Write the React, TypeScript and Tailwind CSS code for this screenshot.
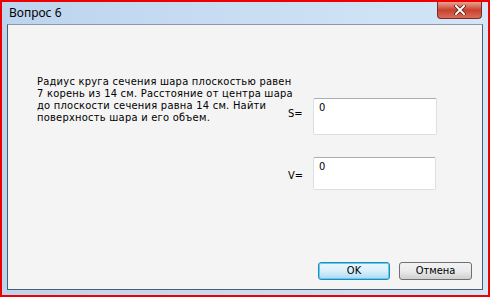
export default function App() {
    const uiFont = { fontFamily: '"DejaVu Sans Condensed", "DejaVu Sans", sans-serif' };

    return (
        <div className="w-[490px] h-[297px] border-2 border-[#ee0000] bg-gradient-to-r from-[#bcd4ee] via-[#c9ddf3] to-[#d3e5f7] flex flex-col overflow-hidden">
            {/* title bar */}
            <div className="h-[22px] flex items-start justify-between shrink-0">
                <span
                    className="pl-[7px] pt-[3px] text-[12px] leading-[16px] text-black"
                    style={{ fontFamily: '"Noto Sans", "Open Sans", sans-serif' }}
                >
                    Вопрос 6
                </span>
                <button className="mr-[6px] w-[45px] h-[17px] rounded-b-[4px] border border-t-0 border-[#7a2a22] bg-gradient-to-b from-[#e8a090] via-[#c8402f] to-[#d86c58] flex items-center justify-center">
                    <svg width="12" height="10" viewBox="0 0 12 10">
                        <path d="M2 1 L10 9 M10 1 L2 9" stroke="#4a1a14" strokeWidth="3.4" strokeLinecap="square" />
                        <path d="M2 1 L10 9 M10 1 L2 9" stroke="#ffffff" strokeWidth="2" strokeLinecap="square" />
                    </svg>
                </button>
            </div>

            {/* client area */}
            <div
                className="flex-1 mx-[5px] mb-[5px] border border-[#4e5d6a] border-t-[#8d99a4] bg-[#f4f4f4] flex flex-col text-[11px] leading-[12px] text-black"
                style={uiFont}
            >
                <div className="flex flex-1">
                    <p className="ml-[29px] mt-[51px] w-[251px] tracking-[0.25px] whitespace-nowrap">
                        Радиус круга сечения шара плоскостью равен<br />
                        7 корень из 14 см. Расстояние от центра шара<br />
                        до плоскости сечения равна 14 см. Найти<br />
                        поверхность шара и его объем.
                    </p>

                    <div className="flex flex-col mt-[73px]">
                        <div className="flex">
                            <span className="w-[25px] mt-[10px]">S=</span>
                            <div className="w-[124px] h-[37px] bg-white border border-[#dbdfe6] border-t-[#abadb3] rounded-[2px] px-[5px] pt-[3px]">
                                0
                            </div>
                        </div>
                        <div className="flex mt-[22px]">
                            <span className="w-[25px] mt-[13px]">V=</span>
                            <div className="w-[123px] h-[33px] bg-white border border-[#dbdfe6] border-t-[#abadb3] rounded-[2px] px-[5px] pt-[3px]">
                                0
                            </div>
                        </div>
                    </div>
                </div>

                <div className="flex justify-end gap-[9px] pr-[10px] pb-[9px]">
                    <button className="w-[72px] h-[18px] rounded-[3px] border border-[#3c7fb1] bg-gradient-to-b from-[#eaf6fd] via-[#d9f0fc] to-[#a7d9f5] shadow-[inset_0_0_0_1px_#48d6fb] text-[11px] leading-[12px]">
                        OK
                    </button>
                    <button className="w-[73px] h-[18px] rounded-[3px] border border-[#707070] bg-gradient-to-b from-[#f2f2f2] via-[#ebebeb] to-[#cfcfcf] text-[11px] leading-[12px]">
                        Отмена
                    </button>
                </div>
            </div>
        </div>
    );
}
